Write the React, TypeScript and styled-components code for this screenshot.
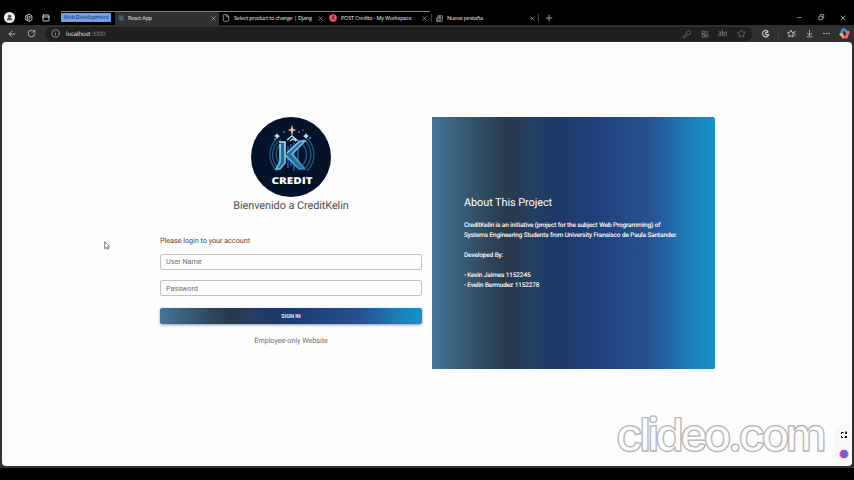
import React from 'react';
import styled, { createGlobalStyle } from 'styled-components';
import {
  ArrowLeft, RotateCw, Info, X, Plus, Minus, Ellipsis, Star, File,
  ArrowDownToLine, PanelTop, Newspaper, Atom, UserRound,
} from 'lucide-react';

const Global = createGlobalStyle`
  *{box-sizing:border-box}
  body{margin:0;background:#000;overflow:hidden;text-rendering:geometricPrecision}
  svg{display:block;flex:none}
`;
const Window = styled.div`
  width:854px;height:480px;display:flex;flex-direction:column;background:#000;
  font-family:Roboto,sans-serif;position:relative;
`;
const TabStrip = styled.header`
  height:25px;padding-top:11px;display:flex;color:#ccc;
  font-family:"Open Sans","Noto Sans",sans-serif;
`;
const ProfileTools = styled.div`
  width:61px;height:13px;padding:0 11px 0 4px;display:flex;align-items:center;justify-content:space-between;
`;
const Avatar = styled.span`
  width:11px;height:11px;border-radius:50%;background:#eee;color:#555;
  display:flex;align-items:center;justify-content:center;
`;
const Group = styled.div`
  width:54px;height:14px;border-top:1px solid #5b82cd;display:flex;align-items:flex-start;padding-top:1px;
`;
const GroupLabel = styled.span`
  width:50px;height:9px;border-radius:1px;background:#709ff0;color:#14284d;text-align:center;
  font-size:5.6px;letter-spacing:-.22px;line-height:9px;white-space:nowrap;
`;
const Tab = styled.div<{ $width: number; $active?: boolean; $grouped?: boolean }>`
  width:${p => p.$width}px;height:14px;display:flex;align-items:center;gap:4px;padding:0 2px 1px 3px;
  border-top:1px solid ${p => (p.$grouped ? '#5b82cd' : 'transparent')};
  background:${p => (p.$active ? '#303030' : '#000')};
`;
const TabTitle = styled.span`
  flex:1;min-width:0;white-space:nowrap;font-size:5.5px;letter-spacing:-.2px;line-height:11px;color:#eee;
`;
const Divider = styled.i<{ $gap?: number }>`
  width:1px;height:8px;background:#444;margin:3px ${p => p.$gap ?? 0}px 0;
`;
const NewTab = styled.div`
  width:20px;height:13px;display:flex;align-items:center;justify-content:center;
`;
const WindowButtons = styled.div`
  margin-left:auto;width:58px;height:13px;display:flex;justify-content:space-between;align-items:center;padding-right:7px;
`;
const Toolbar = styled.div`
  height:17px;background:#303030;display:flex;align-items:center;padding:0 4px 0 7px;color:#c8c8c8;
`;
const Nav = styled.div`
  width:38px;display:flex;gap:10px;align-items:center;
`;
const Address = styled.div`
  width:707px;height:14px;border-radius:7px;background:#202020;display:flex;align-items:center;padding:0 6px;
`;
const Url = styled.span`
  margin-left:6px;flex:1;font:6.1px/12px "Open Sans",sans-serif;letter-spacing:-.13px;color:#eee;
  span{color:#888}
`;
const AddressTools = styled.div`
  width:63px;display:flex;justify-content:space-between;align-items:center;color:#757575;
`;
const BrowserTools = styled.div`
  flex:1;display:flex;align-items:center;justify-content:space-between;padding-left:9px;
`;
const ShellBody = styled.div`
  height:426px;padding:0 2px 2px;background:#303030;
`;
const Page = styled.main`
  height:424px;background:#fdfdfd;border-radius:4px;padding:75px 137px 0 158px;display:flex;gap:10px;
`;
const Login = styled.section`
  width:262px;display:flex;flex-direction:column;align-items:center;
`;
const Welcome = styled.h1`
  margin:2px 0 23px;font-size:10.9px;letter-spacing:-.07px;line-height:14px;font-weight:400;color:#4f4f4f;white-space:nowrap;
`;
const Prompt = styled.p`
  margin:0;align-self:flex-start;font-size:7.3px;letter-spacing:-.06px;line-height:10px;color:#4c4c4c;
`;
const Field = styled.input`
  width:100%;height:16px;border:1px solid #c2c2c2;border-radius:2px;background:transparent;
  padding:0 5px;margin:7.5px 0 3px;font:7.3px Roboto,sans-serif;letter-spacing:-.05px;outline:0;
  &::placeholder{color:#707070;opacity:1}
  & + &{margin-top:7.5px;margin-bottom:12px}
`;
const brandGradient = 'linear-gradient(to right,#467499 0%,#2d475a 20%,#28394b 27%,#243f61 35%,#1d3869 44%,#203f7b 57%,#28508f 76%,#2460a0 82%,#1c7eb8 91%,#1692c9 100%)';
const SignIn = styled.button`
  width:100%;height:16px;border:0;border-radius:2px;background:${brandGradient};color:#fff;
  font:500 5.5px/16px Roboto,sans-serif;padding:0;box-shadow:0 1px 3px #8098bf;
`;
const Notice = styled.p`
  margin:11.5px 0 0;font-size:7.3px;letter-spacing:-.07px;line-height:10px;color:#717171;
`;
const About = styled.section`
  width:283px;height:252px;background:${brandGradient};border-radius:0 2px 2px 0;
  color:#fff;padding:79px 30px 0 32px;margin-top:.4px;
`;
const AboutTitle = styled.h2`
  margin:0 0 9.6px;font-size:10.9px;letter-spacing:-.07px;line-height:14px;font-weight:400;
`;
const AboutText = styled.p`
  margin:0 0 10px;font-size:6.4px;letter-spacing:-.07px;line-height:10px;white-space:nowrap;
  -webkit-text-stroke:.12px #fff;
`;
const Watermark = styled.svg`
  position:absolute;left:610px;top:405px;
`;
const SideTools = styled.div`
  position:absolute;right:2px;top:426px;width:17px;height:38px;border-radius:9px 0 0 9px;
  background:#f8f8f8;display:flex;flex-direction:column;align-items:center;justify-content:space-between;padding:5px 0 5px;
`;
const Pointer = styled.svg`
  position:absolute;left:104px;top:241px;
`;

function CreditLogo() {
  return (
    <svg width="80" height="80" viewBox="0 0 80 80">
      <defs>
        <linearGradient id="letter" x1="0" x2="1" y2="1">
          <stop stopColor="#cceef9" /><stop offset=".5" stopColor="#76c6e6" /><stop offset="1" stopColor="#2982b9" />
        </linearGradient>
      </defs>
      <circle cx="40" cy="40" r="40" fill="#041329" />
      <g fill="none" stroke="#28597f" strokeWidth="1.3">
        <path d="M29 19A22.5 22.5 0 0 0 26 54M53 19A22.5 22.5 0 0 1 56 54" />
        <path d="M30 22A19 19 0 0 0 27 51M52 22A19 19 0 0 1 53 52" />
        <path d="M30 26A15 15 0 0 0 29 47M49 25A16 16 0 0 1 51 49" />
      </g>
      <path d="M37 29v22m3-24v22m3-23v28m4-28v22" stroke="#224b83" strokeWidth="2" />
      <path d="M28 25h7v21l-6 6h-4l4-7V27z" fill="#236d9c" />
      <path d="M48 24h6L41 37l13 15h-6L34 38z" fill="#286c9e" />
      <g fill="none" stroke="url(#letter)" strokeWidth="1.5">
        <path d="M28 25h6v21l-5 6h-4l4-7V27M36 36l13-12h5L41 37l13 15h-6L34 38" />
        <path d="m36 23 5-4 6 5M39 24l3-2 3 2" stroke="#acdcec" />
      </g>
      <path d="m41 8 1.3 4 3.2 1-3.2 1-1.3 5-1.3-5-3.2-1 3.2-1z" fill="#edbc96" />
      <g fill="#d2edf8">
        <path d="m26 16 1 2 2 1-2 1-1 2-1-2-2-1 2-1zM55 16l1 2 2 1-2 1-1 2-1-2-2-1 2-1z" />
        <circle cx="33" cy="15" r=".7" /><circle cx="48" cy="15" r=".7" /><circle cx="59" cy="21" r=".8" />
        <circle cx="24" cy="22" r=".7" /><circle cx="52" cy="13" r=".6" />
      </g>
      <text x="20.5" y="67" textLength="41" lengthAdjust="spacingAndGlyphs" fill="#fff" fontFamily="Open Sans, sans-serif" fontWeight="800" fontSize="9.5">CREDIT</text>
    </svg>
  );
}

function Copilot() {
  return (
    <svg width="11" height="11" viewBox="0 0 12 12" fill="none" strokeWidth="2.8" strokeLinecap="round" strokeLinejoin="round">
      <path d="M5.4 2H4L2 7h1.5" stroke="#3c99df" />
      <path d="M5.4 2h1.2l.8 1" stroke="#4e82dc" />
      <path d="M2 7h1l1.5 3" stroke="#e8b75b" />
      <path d="M8.5 4.5h1.6L8.2 10H5.8" stroke="#ee6a80" />
    </svg>
  );
}

function PostmanMark() {
  return (
    <svg width="8" height="8" viewBox="0 0 8 8">
      <circle cx="4" cy="4" r="3.8" fill="#ef5b61" />
      <path d="m2 6 3.5-4M4 1v3l2 2" stroke="#54252c" strokeWidth=".9" fill="none" />
    </svg>
  );
}

function BrainMark() {
  return (
    <svg width="10" height="10" viewBox="0 0 10 10">
      <path d="M5 1Q2 0 1.5 2.5Q0 3 .7 5Q0 7 2 8Q3 10 5 9z" fill="#d248c2" />
      <path d="M5 1Q8 0 8.5 2.5Q10 3 9.3 5Q10 7 8 8Q7 10 5 9z" fill="#637bd7" />
      <path d="M5 1v8M2 3l1.5 1v2L2 7M8 3 6.5 4v2L8 7" stroke="#733ebf" strokeWidth=".7" fill="none" />
    </svg>
  );
}

const glyphs = {
  workspaces: 'M3 5 9 2l5 3v7l-5 3-6-3zM6 4v9M9 6v8M9 6l4 2',
  key: 'M8 7a4 4 0 1 1 2 2L4 15H1v-3z',
  apps: 'M2 2h5v5H2zM2 9h5v5H2zM9 9h5v5H9zM12 1v6M9 4h6',
  translate: 'M1 5h4v7H2q-2-2 0-4h3M8 2v10h4V7H8M14 4v3h2v4h-2',
  essentials: 'M13 5Q10 1 6 3Q2 5 3 9Q4 14 9 14Q12 14 14 10H9Q7 8 9 6h4',
  favorites: 'm7 2 2 4 4 1-3 3 1 4-4-2-4 2 1-4-3-3 4-1zM12 5h3M13 9h2M13 12h2',
  restore: 'M5 4V1h8v8h-3M2 5h8v8H2z',
  scan: 'M3 6V3h4M10 2h3v4M13 10v3h-4M6 13H3v-3M10 6l3-4M10 10l3 3',
};
function Glyph({ name, size = 9, weight = 1.6 }: { name: keyof typeof glyphs; size?: number; weight?: number }) {
  return (
    <svg width={size} height={size} viewBox="0 0 16 16" fill="none" stroke="currentColor" strokeWidth={weight} strokeLinejoin="round">
      <path d={glyphs[name]} />
    </svg>
  );
}

export default function App() {
  return (
    <Window>
      <Global />
      <TabStrip>
        <ProfileTools>
          <Avatar><UserRound size={7} fill="#555" /></Avatar><Glyph name="workspaces" /><PanelTop size={8} strokeWidth={3} />
        </ProfileTools>
        <Group><GroupLabel>Web Development</GroupLabel></Group>
        <Tab $width={104} $active $grouped>
          <Atom size={6} color="#5797ba" /><TabTitle>React App</TabTitle><X size={7} />
        </Tab>
        <Tab $width={107} $grouped>
          <File size={8} /><TabTitle>Select product to change | Djang</TabTitle><X size={7} />
        </Tab>
        <Tab $width={104} $grouped>
          <PostmanMark /><TabTitle>POST Credito - My Workspace</TabTitle><X size={7} />
        </Tab>
        <Divider $gap={1} />
        <Tab $width={105}>
          <Newspaper size={7} /><TabTitle>Nueva pestaña</TabTitle><X size={7} />
        </Tab>
        <Divider />
        <NewTab><Plus size={10} strokeWidth={1.8} /></NewTab>
        <WindowButtons><Minus size={7} /><Glyph name="restore" size={7} /><X size={8} /></WindowButtons>
      </TabStrip>
      <Toolbar>
        <Nav><ArrowLeft size={10} /><RotateCw size={9} /></Nav>
        <Address>
          <Info size={9} strokeWidth={1.7} />
          <Url>localhost<span>:3000</span></Url>
          <AddressTools>
            <Glyph name="key" size={8} /><Glyph name="apps" size={8} /><Glyph name="translate" size={9} /><Star size={9} />
          </AddressTools>
        </Address>
        <BrowserTools>
          <Glyph name="essentials" weight={2} /><Divider /><Glyph name="favorites" size={9} /><ArrowDownToLine size={9} /><Ellipsis size={9} /><Copilot />
        </BrowserTools>
      </Toolbar>
      <ShellBody>
        <Page>
          <Login>
            <CreditLogo />
            <Welcome>Bienvenido a CreditKelin</Welcome>
            <Prompt>Please login to your account</Prompt>
            <Field placeholder="User Name" />
            <Field placeholder="Password" type="password" />
            <SignIn>SIGN IN</SignIn>
            <Notice>Employee-only Website</Notice>
          </Login>
          <About>
            <AboutTitle>About This Project</AboutTitle>
            <AboutText>CreditKelin is an initiative (project for the subject Web Programming) of<br />Systems Engineering Students from University Fransisco de Paula Santander.</AboutText>
            <AboutText>Developed By:</AboutText>
            <AboutText>- Kevin Jaimes 1152245<br />- Evelin Bermudez 1152278</AboutText>
          </About>
        </Page>
      </ShellBody>
      <Watermark width="225" height="58" viewBox="0 0 225 58">
        <text x="6" y="45.5" textLength="211" lengthAdjust="spacing" fill="#fdfdfd" stroke="#b5b5b5" strokeWidth="1.3" fontFamily="Inter, sans-serif" fontSize="46" fontWeight="600">clideo.com</text>
      </Watermark>
      <SideTools><Glyph name="scan" size={8} weight={2} /><BrainMark /></SideTools>
      <Pointer width="7" height="10" viewBox="0 0 7 10">
        <path d="M.7.7v7l1.6-1.3 1 2 1.2-.6-1-1.9h2z" fill="#fff" stroke="#444" strokeWidth=".7" />
      </Pointer>
    </Window>
  );
}
